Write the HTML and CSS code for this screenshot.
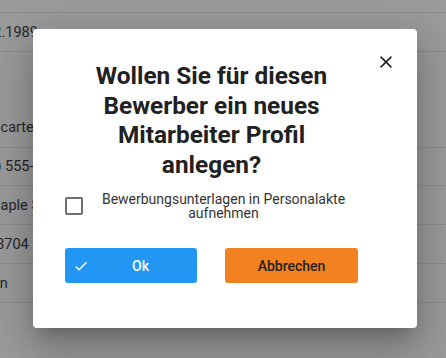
FILE: index.html
```html
<!DOCTYPE html>
<html lang="de">
<head>
<meta charset="utf-8">
<title>Mitarbeiter Profil</title>
<link rel="stylesheet" href="styles.css">
</head>
<body>
<div class="page">
  <div class="rows">
    <div class="row r-top"></div>
    <div class="row r-std"><span class="cell c1">22.02.1989</span></div>
    <div class="row r-tall"><span class="cell c2">m.carter@mail.de</span></div>
    <div class="row r-std r-s37"><span class="cell c3">(555) 555-0123</span></div>
    <div class="row r-std"><span class="cell c4">12 Maple Street</span></div>
    <div class="row r-std"><span class="cell c5">83704</span></div>
    <div class="row r-std"><span class="cell c6">Boston</span></div>
  </div>

  <div class="backdrop">
    <div class="dialog" role="dialog">
      <button class="close" aria-label="Schließen">
        <svg width="12" height="12" viewBox="0 0 12 12"><path d="M0.6 0.6L11.4 11.4M11.4 0.6L0.6 11.4" stroke="#1e1e1e" stroke-width="1.5" fill="none"/></svg>
      </button>
      <h1 class="title">Wollen Sie für diesen Bewerber ein neues Mitarbeiter Profil anlegen?</h1>
      <label class="check-row">
        <span class="box"></span>
        <span class="label">Bewerbungsunterlagen in Personalakte aufnehmen</span>
      </label>
      <div class="actions">
        <button class="btn btn-ok">
          <svg class="ico" width="16" height="16" viewBox="0 0 24 24"><path d="M9 16.17L4.83 12l-1.42 1.41L9 19 21 7l-1.41-1.41z" fill="#ffffff"/></svg>
          <span class="btn-text">Ok</span>
        </button>
        <button class="btn btn-cancel">Abbrechen</button>
      </div>
    </div>
  </div>
</div>
</body>
</html>
```
FILE: styles.css
```css
* { box-sizing: border-box; }
html, body { margin: 0; padding: 0; }
body {
  width: 446px;
  height: 358px;
  overflow: hidden;
  background: #9b9b9b;
  font-family: Roboto, "Liberation Sans", Arial, sans-serif;
}
.page {
  position: relative;
  width: 446px;
  height: 358px;
  overflow: hidden;
}
.rows {
  display: flex;
  flex-direction: column;
}
.row {
  display: flex;
  align-items: center;
  border-bottom: 1px solid #8b8b8b;
  overflow: hidden;
  white-space: nowrap;
  font-size: 14.5px;
  color: #262626;
}
.r-top { height: 13px; }
.r-std { height: 39px; }
.r-s37 { height: 38px; }
.r-tall { height: 96px; align-items: flex-end; padding-bottom: 11px; }
.cell { display: block; }
.c1 { margin-left: -35px; }
.c2 { margin-left: -16px; }
.c3 { margin-left: -33px; }
.c4 { margin-left: -32px; }
.c5 { margin-left: -12px; }
.c6 { margin-left: -38px; }

.backdrop {
  position: absolute;
  inset: 0;
  display: flex;
  align-items: flex-start;
  padding: 29px 0 0 33px;
}
.dialog {
  position: relative;
  width: 384px;
  height: 299px;
  background: #ffffff;
  border-radius: 4px;
  padding: 32px 59px 45px 32px;
  box-shadow: 0 11px 15px -7px rgba(0,0,0,0.2), 0 24px 38px 3px rgba(0,0,0,0.14), 0 9px 46px 8px rgba(0,0,0,0.12);
  display: flex;
  flex-direction: column;
}
.close {
  position: absolute;
  left: 347px;
  top: 27px;
  width: 12px;
  height: 12px;
  padding: 0;
  border: 0;
  background: transparent;
  display: block;
}
.close svg { display: block; }
.title {
  margin: 0;
  padding: 0 24px;
  font-size: 24.4px;
  line-height: 29.5px;
  font-weight: 700;
  color: #212121;
  text-align: center;
}
.check-row {
  margin-top: 13px;
  display: flex;
  align-items: center;
}
.box {
  flex: none;
  width: 18px;
  height: 18px;
  border: 2px solid #707070;
  border-radius: 2px;
}
.label {
  flex: 1;
  margin-left: 6px;
  font-size: 14px;
  line-height: 14px;
  color: #333333;
  text-align: center;
}
.actions {
  margin-top: 28px;
  display: grid;
  grid-template-columns: 132px 133px;
  column-gap: 28px;
}
.btn {
  height: 35px;
  border: 0;
  border-radius: 3px;
  font-family: inherit;
  font-size: 14px;
  font-weight: 500;
  padding: 0;
}
.btn-ok {
  background: #2196f3;
  color: #ffffff;
  display: flex;
  align-items: center;
  padding-left: 8px;
  padding-right: 5px;
}
.ico { display: block; flex: none; }
.btn-text { flex: 1; text-align: center; }
.btn-cancel {
  background: #f48120;
  color: #212121;
}
```
